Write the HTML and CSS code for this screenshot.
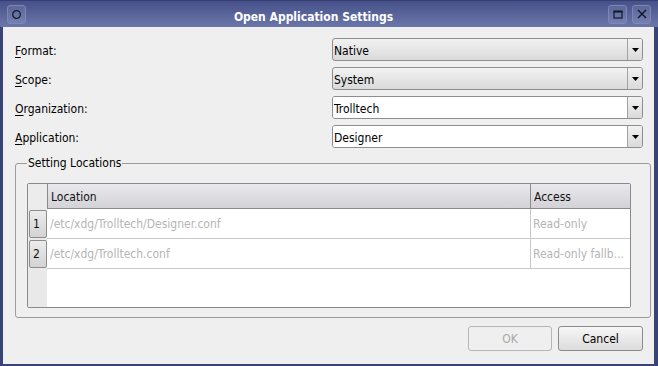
FILE: index.html
```html
<!DOCTYPE html>
<html>
<head>
<meta charset="utf-8">
<link rel="stylesheet" href="styles.css">
</head>
<body>
<div class="window">
  <div class="titlebar">
    <span class="tb-btn"><svg width="11" height="11" viewBox="0 0 11 11"><circle cx="5.5" cy="5.5" r="3.8" fill="none" stroke="#15182a" stroke-width="1.3"/></svg></span>
    <span class="title">Open Application Settings</span>
    <span class="tb-btn"><svg width="10" height="9" viewBox="0 0 10 9"><rect x="1" y="1.5" width="8" height="6.5" fill="none" stroke="#15182a" stroke-width="1.2"/><rect x="0.5" y="0.5" width="9" height="2" fill="#15182a"/></svg></span>
    <span class="tb-btn close"><svg width="10" height="10" viewBox="0 0 10 10"><path d="M1 1L9 9M9 1L1 9" stroke="#15182a" stroke-width="1.5" fill="none"/></svg></span>
  </div>
  <div class="content">
    <div class="form">
      <label class="lbl"><span><u>F</u>ormat:</span></label>
      <div class="combo ro"><span class="val">Native</span><span class="arrow"><svg width="7" height="4" viewBox="0 0 7 4"><path d="M0 0H7L3.5 4Z" fill="#000"/></svg></span></div>
      <label class="lbl"><span><u>S</u>cope:</span></label>
      <div class="combo ro"><span class="val">System</span><span class="arrow"><svg width="7" height="4" viewBox="0 0 7 4"><path d="M0 0H7L3.5 4Z" fill="#000"/></svg></span></div>
      <label class="lbl"><span><u>O</u>rganization:</span></label>
      <div class="combo ed"><span class="val">Trolltech</span><span class="arrow"><svg width="7" height="4" viewBox="0 0 7 4"><path d="M0 0H7L3.5 4Z" fill="#000"/></svg></span></div>
      <label class="lbl"><span><u>A</u>pplication:</span></label>
      <div class="combo ed"><span class="val">Designer</span><span class="arrow"><svg width="7" height="4" viewBox="0 0 7 4"><path d="M0 0H7L3.5 4Z" fill="#000"/></svg></span></div>
    </div>
    <fieldset class="group">
      <legend class="legend">Setting Locations</legend>
      <div class="table">
        <div class="corner"></div>
        <div class="th">Location</div>
        <div class="th">Access</div>

        <div class="rh"><span class="rhbtn">1</span></div>
        <div class="td loc">/etc/xdg/Trolltech/Designer.conf</div>
        <div class="td acc">Read-only</div>

        <div class="rh"><span class="rhbtn">2</span></div>
        <div class="td loc">/etc/xdg/Trolltech.conf</div>
        <div class="td acc">Read-only fallb...</div>

        <div class="rhfill"></div>
        <div class="fill"></div>
      </div>
    </fieldset>
    <div class="buttons">
      <button class="btn ok" disabled>OK</button>
      <button class="btn cancel">Cancel</button>
    </div>
  </div>
</div>
</body>
</html>
```
FILE: styles.css
```css
* { box-sizing: border-box; }
html, body { margin: 0; padding: 0; }
body {
  width: 658px;
  height: 366px;
  overflow: hidden;
  font-family: "DejaVu Sans Condensed", "DejaVu Sans", sans-serif;
  font-size: 12px;
  line-height: 14px;
  color: #000;
}
.window {
  width: 658px;
  height: 366px;
  display: flex;
  flex-direction: column;
  background: #3a4375;
}
.titlebar {
  height: 27px;
  flex: none;
  display: flex;
  align-items: center;
  padding: 0 7px;
  gap: 5px;
  background: linear-gradient(#46518a, #6b76a8);
  border-top: 1px solid #353e70;
}
.tb-btn {
  width: 19px;
  height: 19px;
  flex: none;
  display: flex;
  align-items: center;
  justify-content: center;
  border: 1px solid #7d87b5;
  border-radius: 3px;
  background: linear-gradient(#5c6799, #7480b1);
}
.title {
  flex: 1;
  text-align: center;
  color: #fff;
  font-weight: bold;
  padding: 5px 7px 0 0;
}
.content {
  flex: 1;
  display: flex;
  flex-direction: column;
  background: #efefef;
  margin: 0 4px 2px 3px;
  padding: 11px 3px 13px 12px;
  min-height: 0;
}
.form {
  display: grid;
  grid-template-columns: 1fr 311px;
  row-gap: 6px;
  margin-right: 8px;
}
.lbl {
  height: 23px;
  display: flex;
  align-items: center;
  padding-top: 2px;
}
.lbl u { text-underline-offset: 2px; }
.combo {
  height: 23px;
  display: flex;
  border: 1px solid #8e8e8e;
  border-radius: 3px;
  overflow: hidden;
}
.combo.ro { background: linear-gradient(#f2f2f2, #dadada); }
.combo .val {
  flex: 1;
  display: flex;
  align-items: center;
  padding: 2px 0 0 1px;
}
.combo.ed .val { background: #fff; }
.combo .arrow {
  width: 15px;
  flex: none;
  display: flex;
  align-items: center;
  justify-content: center;
  border-left: 1px solid #a2a2a2;
  background: linear-gradient(#f2f2f2, #dadada);
}
.group {
  flex: 1;
  min-height: 0;
  min-width: 0;
  margin: 8px 0 0 0;
  border: 1px solid #9c9c9c;
  border-radius: 3px;
  padding: 13px 19px 9px 11px;
  display: flex;
  flex-direction: column;
}
.legend {
  padding: 0 1px;
  line-height: 14px;
}
.table {
  flex: 1;
  min-height: 0;
  border: 1px solid #8a8a8a;
  border-radius: 2px;
  display: grid;
  grid-template-columns: 19px 483px 1fr;
  grid-template-rows: 25px 30px 30px 1fr;
  background: #fff;
  overflow: hidden;
}
.corner { background: #ececec; }
.th {
  display: flex;
  align-items: center;
  padding: 1px 3px 0;
  background: linear-gradient(#e9e9ed, #d2d2d7);
  border-left: 1px solid #8a8a8a;
  border-bottom: 1px solid #8a8a8a;
  color: #111;
}
.rh {
  background: #e9e9e9;
  padding: 1px 0 1px 1px;
}
.rhbtn {
  display: flex;
  align-items: center;
  height: 28px;
  width: 18px;
  padding: 0 0 0 3px;
  border: 1px solid #8c8c8c;
  border-radius: 2px;
  background: linear-gradient(#ececec, #d3d3d3);
  color: #111;
}
.td {
  display: flex;
  align-items: center;
  white-space: nowrap;
  overflow: hidden;
  border-bottom: 1px solid #c9c9c9;
  color: #b5b5b5;
  padding: 0 3px;
}
.td.acc {
  border-left: 1px solid #c9c9c9;
  padding-left: 2px;
}
.rhfill { background: #e9e9e9; }
.fill { grid-column: span 2; background: #fff; }
.buttons {
  flex: none;
  display: flex;
  justify-content: flex-end;
  gap: 6px;
  margin: 8px 8px 0 0;
}
.btn {
  height: 25px;
  padding: 0;
  font: inherit;
  line-height: 14px;
  color: #000;
  border: 1px solid #8b8b8b;
  border-radius: 3px;
  background: linear-gradient(#f6f6f6, #dcdcdc);
}
.btn.ok {
  width: 84px;
  border-color: #b5b5b5;
  background: #efefef;
  color: #a8a8a8;
}
.btn.cancel { width: 85px; }
```
